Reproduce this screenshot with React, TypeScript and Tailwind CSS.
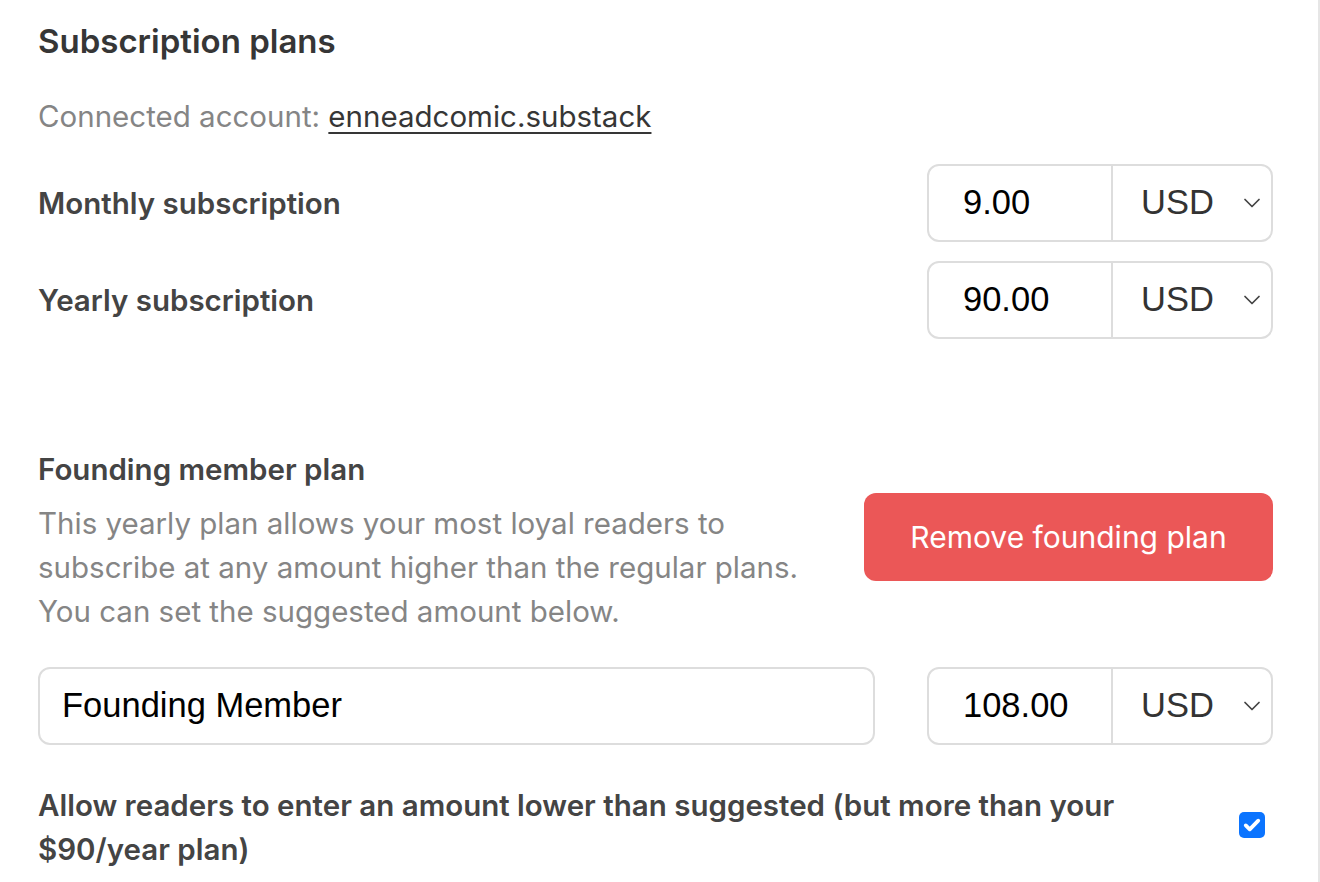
import { ChevronDown } from "lucide-react";

const ui = "font-['Inter','Noto_Sans',sans-serif]";
const field = "font-['Liberation_Sans','Arial',sans-serif]";

function PriceInput({ value }: { value: string }) {
  return (
    <div className="flex h-[78px] w-[346px] shrink-0 overflow-hidden rounded-[12px] border-2 border-[#dddddd] bg-white">
      <div className={`${field} flex w-[184px] items-center border-r-2 border-[#dddddd] pl-[34px] text-[34.5px] text-black`}>
        {value}
      </div>
      <div className={`${field} flex flex-1 items-center justify-between pl-[28px] pr-[5px] text-[34.5px] text-[#333333]`}>
        <span>USD</span>
        <ChevronDown className="h-[28px] w-[28px] text-[#444444]" strokeWidth={1.5} />
      </div>
    </div>
  );
}

function PriceRow({ label, value }: { label: string; value: string }) {
  return (
    <div className="flex items-center justify-between">
      <span className="text-[29.5px] font-semibold text-[#444444]">{label}</span>
      <PriceInput value={value} />
    </div>
  );
}

export default function App() {
  return (
    <div className={`${ui} h-[882px] w-[1320px] overflow-hidden border-r-2 border-[#e6e6e6] bg-white`}>
      <div className="pl-[38px] pr-[45px] pt-[18px]">
        <h1 className="text-[33px] font-semibold leading-[46px] text-[#363636]">Subscription plans</h1>
        <p className="mt-[32px] text-[29.5px] leading-[40px] text-[#858585]">
          Connected account:{" "}
          <a className="text-[#363636] underline decoration-[2px] underline-offset-[5px]">enneadcomic.substack</a>
        </p>

        <div className="mt-[28px] flex flex-col gap-[19px]">
          <PriceRow label="Monthly subscription" value="9.00" />
          <PriceRow label="Yearly subscription" value="90.00" />
        </div>

        <div className="mt-[110px] flex items-start justify-between">
          <div className="w-[810px]">
            <h2 className="text-[29.5px] font-semibold leading-[40px] text-[#444444]">Founding member plan</h2>
            <p className="mt-[12px] text-[29.5px] leading-[44px] text-[#858585]">
              This yearly plan allows your most loyal readers to subscribe at any amount higher than the regular plans.
              You can set the suggested amount below.
            </p>
          </div>
          <button className="mt-[44px] h-[88px] w-[409px] rounded-[12px] bg-[#eb5757] text-[30px] text-white">
            Remove founding plan
          </button>
        </div>

        <div className="mt-[34px] flex items-center justify-between">
          <div className={`${field} flex h-[78px] w-[837px] items-center rounded-[12px] border-2 border-[#dddddd] pl-[22px] text-[34.5px] text-black`}>
            Founding Member
          </div>
          <PriceInput value="108.00" />
        </div>

        <div className="mt-[38px] flex items-center justify-between">
          <p className="w-[1120px] text-[29.5px] font-semibold leading-[44px] text-[#444444]">
            Allow readers to enter an amount lower than suggested (but more than your $90/year plan)
          </p>
          <span className="mr-[8px] -mt-[4px] flex h-[26px] w-[26px] items-center justify-center rounded-[5px] bg-[#0b74ff]">
            <svg viewBox="0 0 16 16" className="h-[20px] w-[20px]">
              <path d="M3 8.3l3.2 3.2L13 4.5" fill="none" stroke="white" strokeWidth="3" strokeLinecap="round" strokeLinejoin="round" />
            </svg>
          </span>
        </div>
      </div>
    </div>
  );
}
